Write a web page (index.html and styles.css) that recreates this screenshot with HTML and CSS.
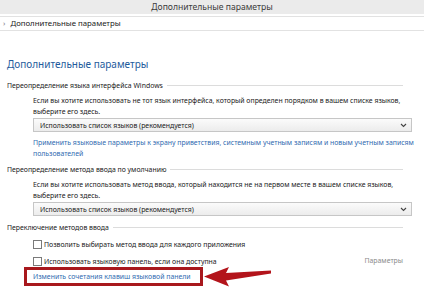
FILE: index.html
```html
<!DOCTYPE html>
<html lang="ru">
<head>
    <meta charset="UTF-8">
    <title>Дополнительные параметры</title>
    <link rel="stylesheet" href="styles.css">
</head>
<body>

<div class="titlebar">Дополнительные параметры</div>
<div class="addressbar"><span class="crumb-arrow">›</span> Дополнительные параметры</div>

<div class="content">
    <h2>Дополнительные параметры</h2>

    <!-- Язык интерфейса -->
    <div class="group-title"><span>Переопределение языка интерфейса Windows</span></div>
    <div class="group">
        <p>Если вы хотите использовать не тот язык интерфейса, который определен порядком в вашем списке языков,<br>выберите его здесь.</p>
        <div class="select">
            <span>Использовать список языков (рекомендуется)</span>
            <svg class="chevron" width="7" height="5" viewBox="0 0 7 5"><path d="M1 1 L3.5 3.5 L6 1" fill="none" stroke="#444" stroke-width="1.1"/></svg>
        </div>
        <a class="link" href="#">Применить языковые параметры к экрану приветствия, системным учетным записям и новым учетным записям<br>пользователей</a>
    </div>

    <!-- Метод ввода -->
    <div class="group-title"><span>Переопределение метода ввода по умолчанию</span></div>
    <div class="group">
        <p>Если вы хотите использовать метод ввода, который находится не на первом месте в вашем списке языков,<br>выберите его здесь.</p>
        <div class="select">
            <span>Использовать список языков (рекомендуется)</span>
            <svg class="chevron" width="7" height="5" viewBox="0 0 7 5"><path d="M1 1 L3.5 3.5 L6 1" fill="none" stroke="#444" stroke-width="1.1"/></svg>
        </div>
    </div>

    <!-- Переключение -->
    <div class="group-title"><span>Переключение методов ввода</span></div>
    <div class="group checks">
        <label class="check"><span class="box"></span>Позволить выбирать метод ввода для каждого приложения</label>
        <div class="check-row">
            <label class="check"><span class="box"></span>Использовать языковую панель, если она доступна</label>
            <span class="params">Параметры</span>
        </div>
        <div class="marked-row">
            <a class="link marked" href="#">Изменить сочетания клавиш языковой панели</a>
            <svg class="arrow" width="68" height="21" viewBox="0 0 68 21">
                <path d="M0 10.5 L25 1 L22 7 L67 4.5 L67 7.5 L22 14.5 L25 20.5 Z" fill="#b3141b"/>
            </svg>
        </div>
    </div>
</div>

</body>
</html>
```

FILE: styles.css
```css
body {
    margin: 0;
    padding: 0;
    background-color: #fff;
    font-family: "Noto Sans", "Open Sans", sans-serif;
    font-size: 6.9px;
    color: #1a1a1a;
    width: 424px;
    height: 292px;
    overflow: hidden;
}
.titlebar {
    height: 14px;
    line-height: 14px;
    background-color: #ebebeb;
    text-align: center;
    font-size: 8.6px;
    color: #3c3c3c;
}
.addressbar {
    margin-top: 2px;
    height: 13px;
    line-height: 13px;
    border-top: 1px solid #e2e2e2;
    border-bottom: 1px solid #e2e2e2;
    padding-left: 3px;
    font-size: 7.8px;
    color: #222;
}
.crumb-arrow {
    color: #777;
    margin-right: 3px;
}
.content {
    padding: 0 12px 0 7px;
}
h2 {
    margin: 27px 0 8px 0;
    height: 13px;
    line-height: 13px;
    font-size: 10px;
    font-weight: normal;
    color: #1e5b9c;
}
.group-title {
    display: flex;
    align-items: center;
    gap: 4px;
    height: 12px;
    margin-bottom: 4px;
    white-space: nowrap;
}
.group-title::after {
    content: "";
    flex: 1;
    border-top: 1px solid #dcdcdc;
    margin-right: 9px;
}
.group {
    padding-left: 26px;
    margin-bottom: 2px;
}
p {
    margin: 0 0 1px 0;
    line-height: 11px;
    white-space: nowrap;
}
.select {
    display: flex;
    align-items: center;
    justify-content: space-between;
    height: 12px;
    border: 1px solid #c6c6c6;
    background: linear-gradient(#fbfbfb, #ececec);
    padding: 0 4px 0 6px;
    margin-bottom: 5px;
}
.link {
    display: block;
    color: #2f6ab0;
    text-decoration: none;
    line-height: 11px;
    margin-bottom: 4px;
    white-space: nowrap;
}
.checks {
    padding-top: 2px;
}
.check-row {
    display: flex;
    justify-content: space-between;
    padding-right: 9px;
}
.check {
    display: flex;
    align-items: center;
    gap: 2px;
    height: 10px;
    margin-bottom: 7px;
    white-space: nowrap;
}
.box {
    width: 7px;
    height: 7px;
    border: 1px solid #7a7a7a;
    background-color: #fff;
}
.params {
    color: #8a8a8a;
    line-height: 10px;
}
.marked-row {
    display: flex;
    align-items: center;
    margin-left: -9px;
    margin-top: -7px;
}
.link.marked {
    width: 179px;
    box-sizing: border-box;
    border: 3px solid #a8181d;
    padding: 1px 6px;
    margin-bottom: 0;
}
.arrow {
    margin-left: 1px;
}
```
